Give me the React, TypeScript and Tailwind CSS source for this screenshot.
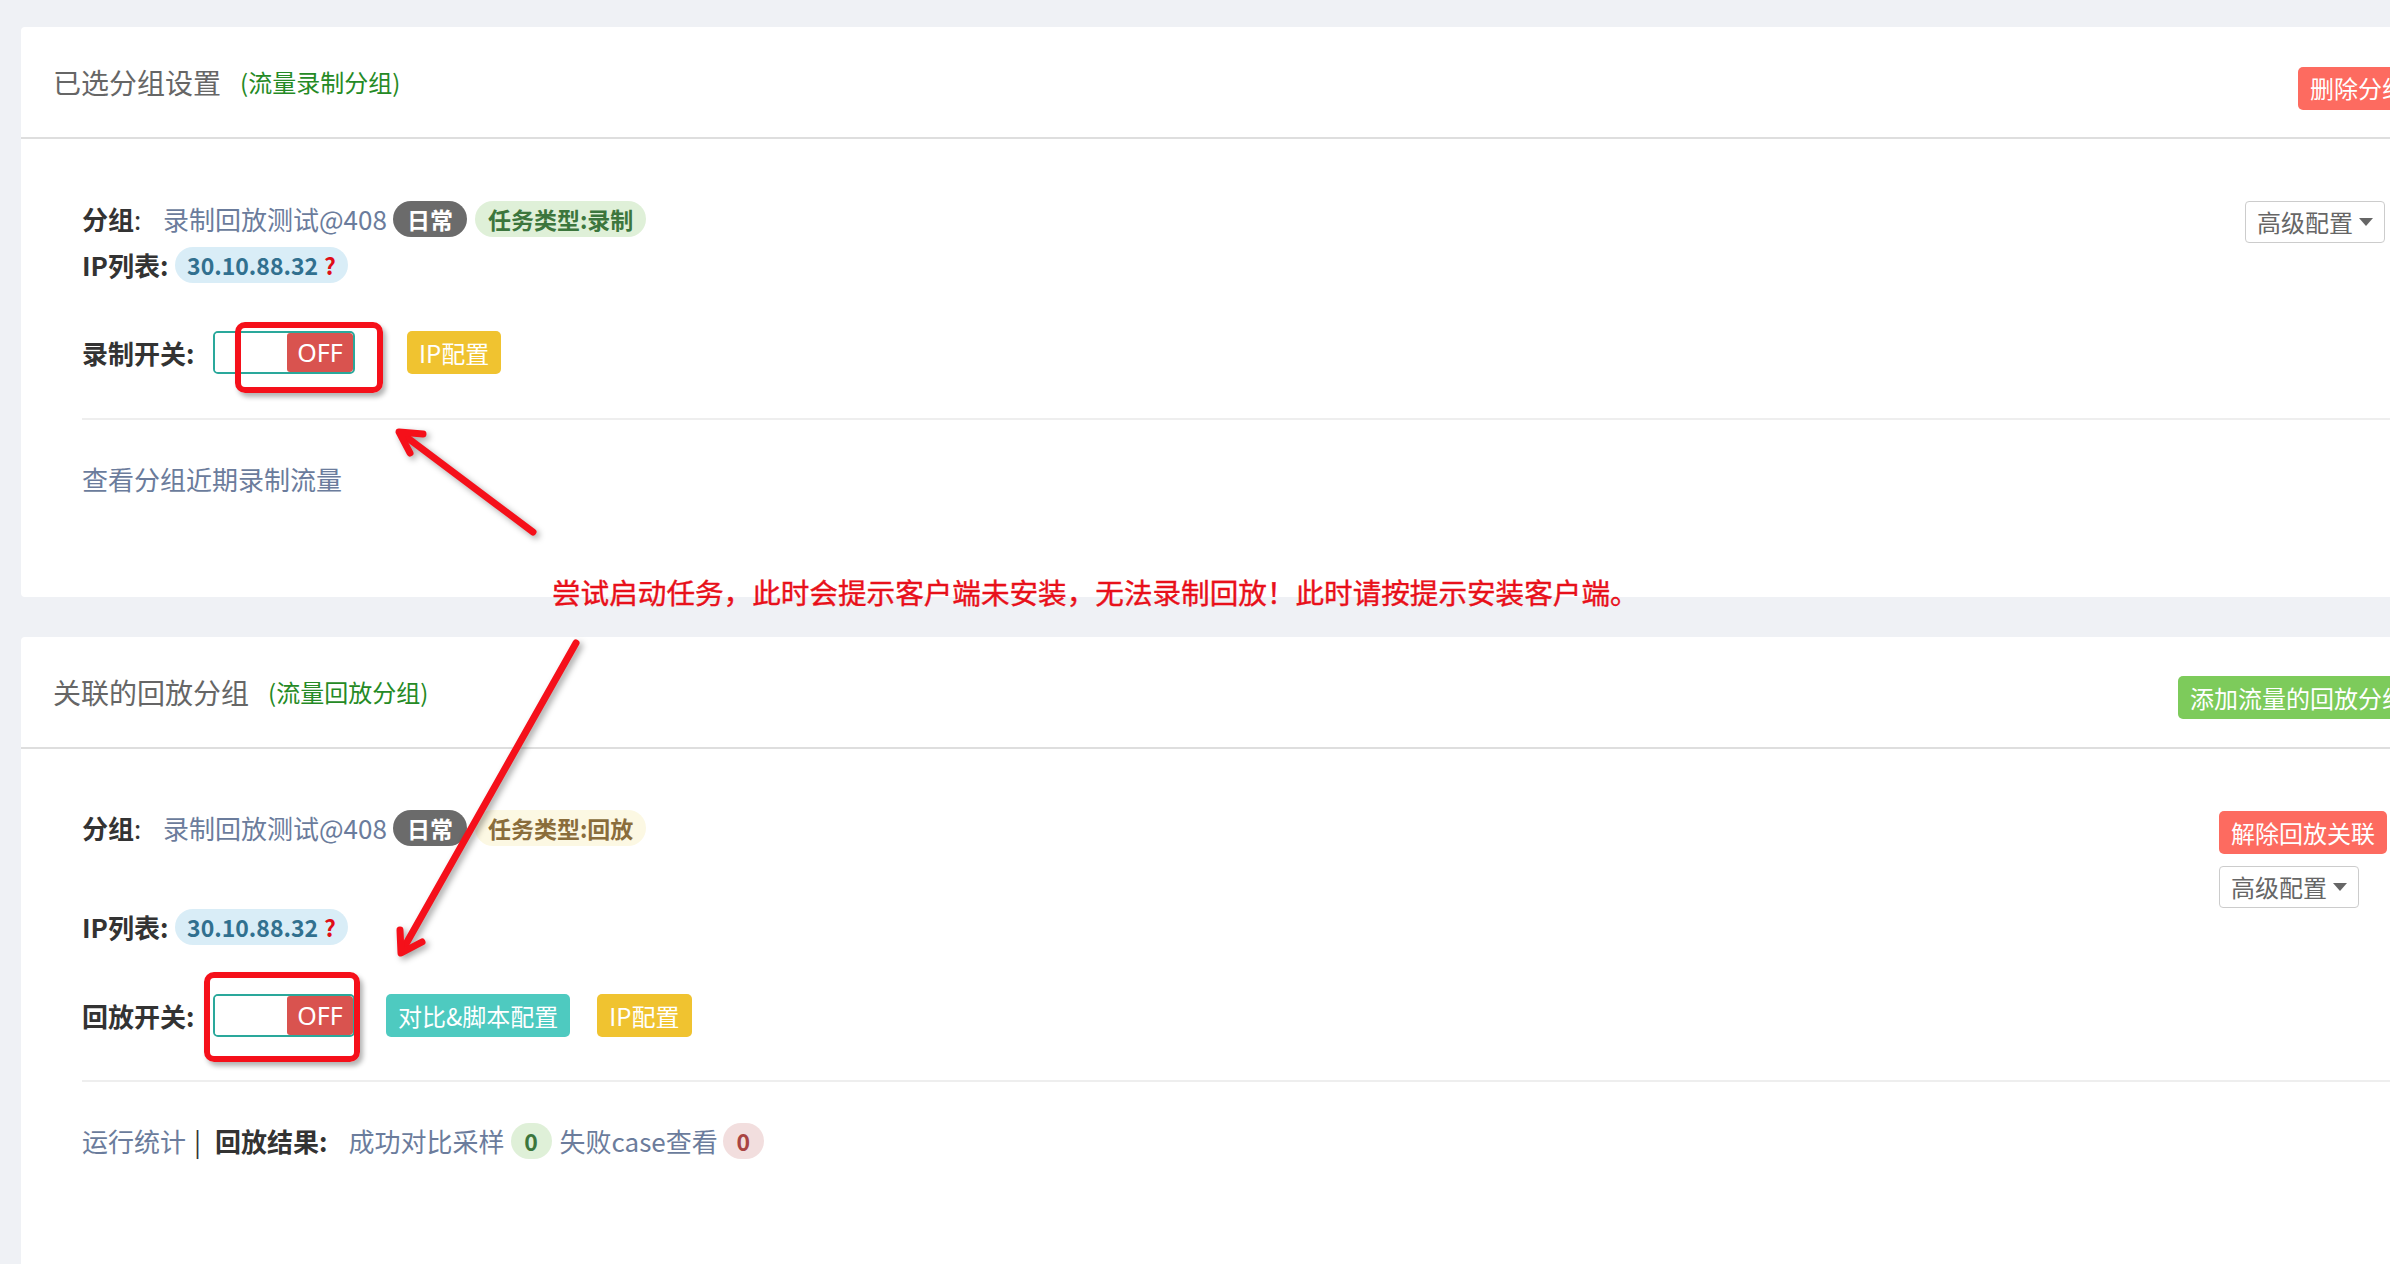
import React from "react";

const Switch = () => (
  <div className="w-[142px] h-[43px] border-2 border-[#2aa89b] rounded-[5px] flex overflow-hidden">
    <div className="flex-1 bg-white" />
    <div className="w-[66px] bg-[#d9534f] rounded-[3px] text-white text-[25px] leading-none flex items-center justify-center font-['Noto_Sans',sans-serif]">
      OFF
    </div>
  </div>
);

const Caret = () => (
  <svg width="14" height="8" viewBox="0 0 14 8" className="ml-[6px]">
    <path d="M0 0 L14 0 L7 8 Z" fill="#666" />
  </svg>
);

const Dropdown = () => (
  <div className="h-[42px] px-[11px] border border-[#ccc] rounded-[4px] bg-white flex items-center text-[24px] text-[#666] leading-none">
    高级配置
    <Caret />
  </div>
);

const Btn = ({ children, cls }: { children: React.ReactNode; cls: string }) => (
  <div className={"h-[43px] px-[12px] rounded-[5px] text-white text-[24px] leading-none flex items-center whitespace-nowrap " + cls}>
    {children}
  </div>
);

const Badge = ({ children, cls }: { children: React.ReactNode; cls: string }) => (
  <span className={"h-[36px] rounded-full text-[23px] font-bold leading-none inline-flex items-center justify-center whitespace-nowrap " + cls}>
    {children}
  </span>
);

const GroupRow = ({ type, typeCls }: { type: string; typeCls: string }) => (
  <div className="h-[36px] flex items-center text-[26px] leading-none">
    <span className="w-[81px] text-[#333] whitespace-nowrap">
      <b className="font-bold">分组</b>:
    </span>
    <span className="text-[#6b7c9c] whitespace-nowrap">录制回放测试@408</span>
    <Badge cls="ml-[6px] px-[14px] bg-[#6b6b6b] text-white">日常</Badge>
    <Badge cls={"ml-[8px] px-[13px] " + typeCls}>{type}</Badge>
  </div>
);

const IpRow = ({ cls }: { cls: string }) => (
  <div className={"h-[36px] flex items-center text-[26px] leading-none " + cls}>
    <span className="w-[93px] font-bold text-[#333] whitespace-nowrap">IP列表:</span>
    <Badge cls="w-[173px] bg-[#d9edf7] text-[#31708f]">
      30.10.88.32<span className="ml-[6px] text-[#e00d16]">?</span>
    </Badge>
  </div>
);

export default function App() {
  return (
    <div className="relative w-[2390px] h-[1264px] overflow-hidden bg-[#eff1f5] font-['Noto_Sans_CJK_SC','Noto_Sans',sans-serif]">
      <div className="w-[2460px] pt-[27px] pl-[21px]">
        {/* Card 1 */}
        <div className="bg-white rounded-[4px] h-[570px]">
          <div className="h-[112px] border-b-2 border-[#dedede] flex items-center pl-[32px] pr-[42px]">
            <span className="text-[28px] text-[#666] leading-none">已选分组设置</span>
            <span className="ml-[19px] text-[24px] text-[#258a25] leading-none">(流量录制分组)</span>
            <Btn cls="ml-auto mt-[12px] bg-[#fd6b60]">删除分组</Btn>
          </div>
          <div className="pl-[61px] pr-[75px]">
            <div className="flex items-start">
              <div className="flex-1">
                <div className="mt-[62px]">
                  <GroupRow type="任务类型:录制" typeCls="bg-[#dff0d8] text-[#3c763d]" />
                </div>
                <IpRow cls="mt-[10px]" />
                <div className="mt-[48px] flex items-center">
                  <span className="w-[131px] text-[26px] font-bold text-[#333] leading-none whitespace-nowrap">录制开关:</span>
                  <Switch />
                  <Btn cls="ml-[52px] bg-[#f0c330]">IP配置</Btn>
                </div>
              </div>
              <div className="mt-[62px]">
                <Dropdown />
              </div>
            </div>
            <div className="h-[2px] bg-[#eeeeee] mt-[44px] -mr-[75px]" />
            <div className="mt-[41px] h-[36px] flex items-center text-[26px] leading-none text-[#6b7c9c]">
              查看分组近期录制流量
            </div>
          </div>
        </div>

        {/* Card 2 */}
        <div className="mt-[40px] bg-white rounded-[4px] h-[700px]">
          <div className="h-[112px] border-b-2 border-[#dedede] flex items-center pl-[32px] pr-[42px]">
            <span className="text-[28px] text-[#666] leading-none">关联的回放分组</span>
            <span className="ml-[19px] text-[24px] text-[#258a25] leading-none">(流量回放分组)</span>
            <Btn cls="ml-auto mt-[11px] bg-[#7dcb5b]">添加流量的回放分组</Btn>
          </div>
          <div className="pl-[61px] pr-[73px]">
            <div className="flex items-start">
              <div className="flex-1">
                <div className="mt-[61px]">
                  <GroupRow type="任务类型:回放" typeCls="bg-[#fcf8e3] text-[#8a6d3b]" />
                </div>
                <IpRow cls="mt-[63px]" />
                <div className="mt-[49px] flex items-center">
                  <span className="w-[131px] text-[26px] font-bold text-[#333] leading-none whitespace-nowrap">回放开关:</span>
                  <Switch />
                  <Btn cls="ml-[31px] bg-[#4ecac0]">对比&amp;脚本配置</Btn>
                  <Btn cls="ml-[27px] bg-[#f0c330]">IP配置</Btn>
                </div>
              </div>
              <div className="mt-[62px] flex flex-col items-start gap-[12px]">
                <Btn cls="h-[42px] bg-[#fd6b60]">解除回放关联</Btn>
                <Dropdown />
              </div>
            </div>
            <div className="h-[2px] bg-[#eeeeee] mt-[43px] -mr-[73px]" />
            <div className="mt-[41px] h-[36px] flex items-center text-[26px] leading-none whitespace-nowrap">
              <span className="text-[#6b7c9c]">运行统计</span>
              <span className="ml-[8px] text-[#333]">|</span>
              <span className="ml-[14px] font-bold text-[#333]">回放结果:</span>
              <span className="ml-[21px] text-[#6b7c9c]">成功对比采样</span>
              <Badge cls="ml-[6px] w-[41px] bg-[#dff0d8] text-[#3c763d]">0</Badge>
              <span className="ml-[8px] text-[#6b7c9c]">失败case查看</span>
              <Badge cls="ml-[5px] w-[41px] bg-[#f2dede] text-[#a94442]">0</Badge>
            </div>
          </div>
        </div>
      </div>

      {/* Annotation overlays */}
      <div className="absolute left-[552px] top-[578px] h-[30px] text-[28.6px] leading-none text-[#e8101a] whitespace-nowrap [-webkit-text-stroke:0.4px_#e8101a]">
        尝试启动任务，此时会提示客户端未安装，无法录制回放！此时请按提示安装客户端。
      </div>
      <div className="absolute left-[235px] top-[322px] w-[148px] h-[71px] border-[6px] border-[#f5101a] rounded-[10px] shadow-[3px_4px_5px_rgba(0,0,0,0.3)]" />
      <div className="absolute left-[204px] top-[972px] w-[156px] h-[90px] border-[6px] border-[#f5101a] rounded-[10px] shadow-[3px_4px_5px_rgba(0,0,0,0.3)]" />
      <svg
        className="absolute left-0 top-0 pointer-events-none"
        width="2390"
        height="1264"
        style={{ filter: "drop-shadow(3px 3px 3px rgba(0,0,0,0.35))" }}
      >
        <g stroke="#f5101a" strokeWidth="7" strokeLinecap="round" strokeLinejoin="round" fill="none">
          <path d="M533 532 L401 433" />
          <path d="M423 434 L399 432 L410 453" />
          <path d="M576 643 L402 951" />
          <path d="M400 930 L401 953 L422 942" />
        </g>
      </svg>
    </div>
  );
}
